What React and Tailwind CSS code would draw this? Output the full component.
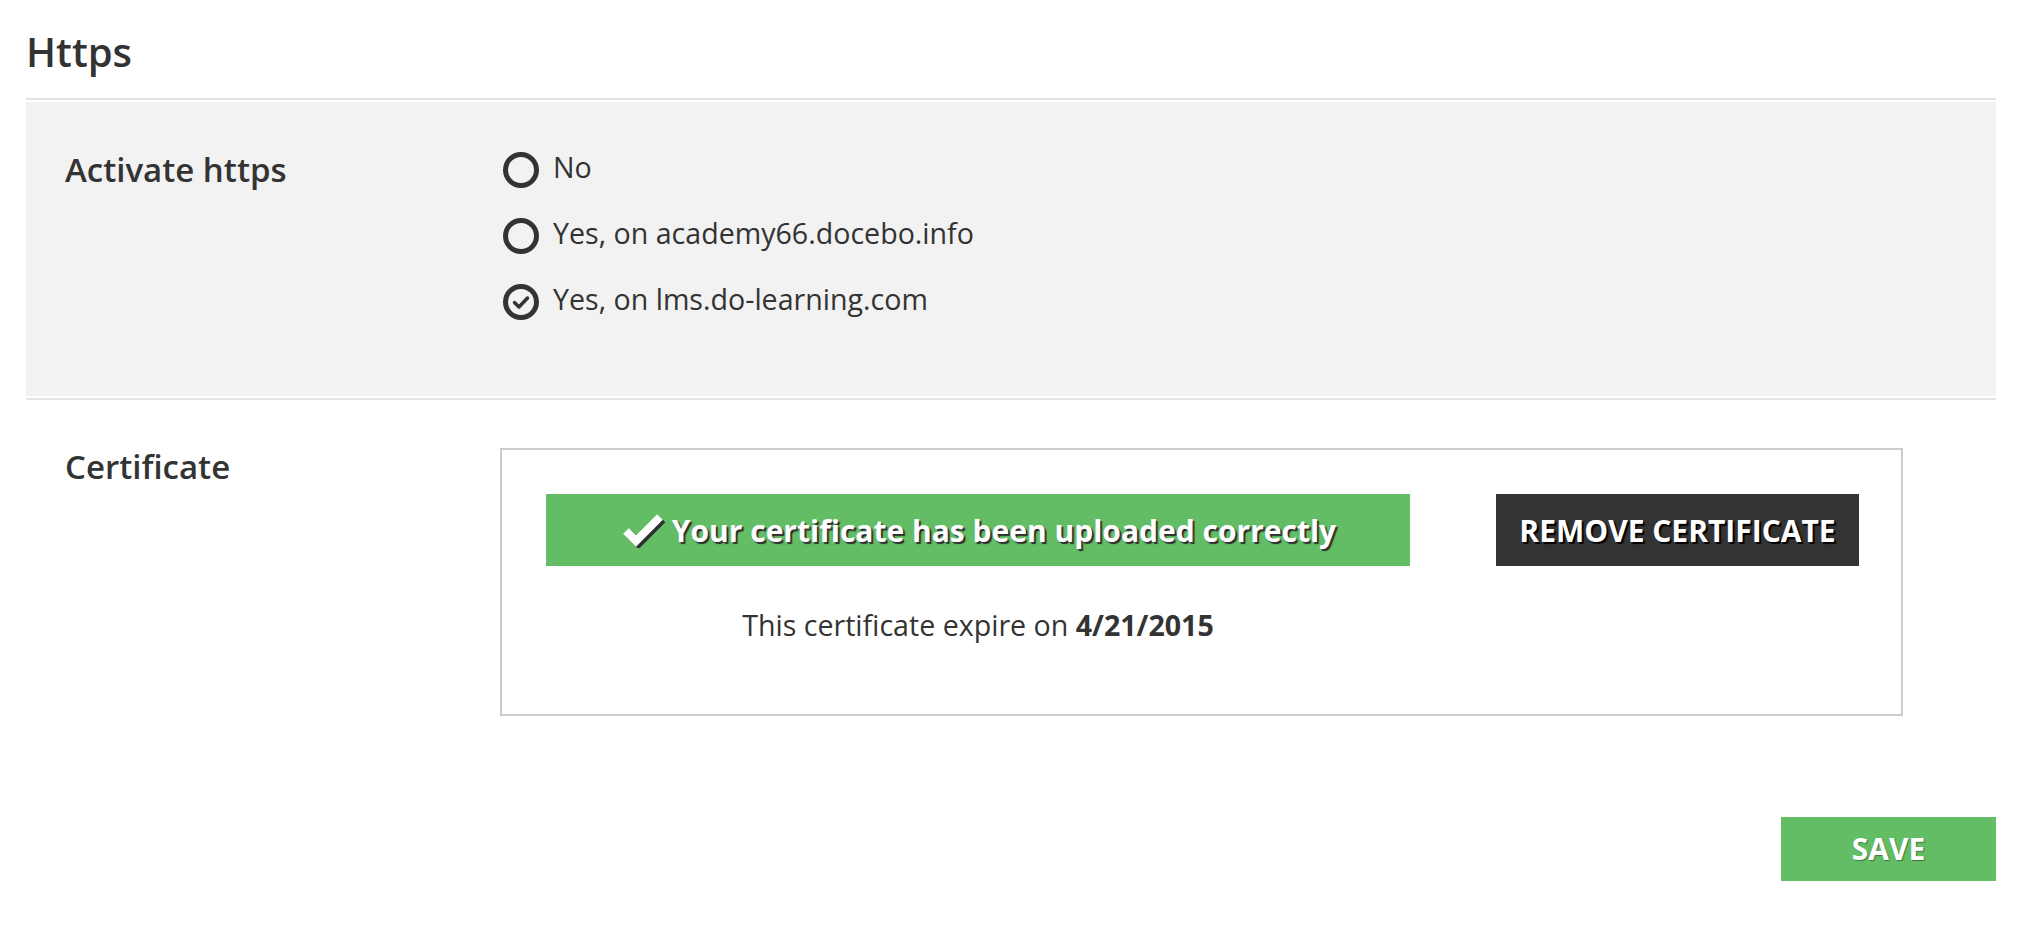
import React from "react";

function Radio({ checked }) {
  return (
    <svg width="38" height="38" viewBox="0 0 38 38" className="mt-[17px] shrink-0">
      <circle cx="19" cy="19" r="15.5" fill="none" stroke="#333333" strokeWidth="5" />
      {checked && (
        <path d="M12.5 19.5l4.5 4.5 8.5-9" fill="none" stroke="#333333" strokeWidth="3.5" strokeLinecap="round" strokeLinejoin="round" />
      )}
    </svg>
  );
}

function Check() {
  return (
    <svg width="46" height="36" viewBox="0 0 46 36" className="shrink-0">
      <path d="M6 19l10 10L40 5" fill="none" stroke="#2f2f2f" strokeWidth="8" transform="translate(2.5 2.5)" />
      <path d="M6 19l10 10L40 5" fill="none" stroke="#ffffff" strokeWidth="8" />
    </svg>
  );
}

const options = [
  { label: "No", checked: false },
  { label: "Yes, on academy66.docebo.info", checked: false },
  { label: "Yes, on lms.do-learning.com", checked: true },
];

export default function App() {
  return (
    <div className="min-h-[930px] bg-white pl-[26px] pr-[32px] font-['Open_Sans',sans-serif] text-[#333333]">
      <h1 className="pt-[32px] text-[40px] font-semibold leading-none">Https</h1>

      {/* activate https */}
      <div className="mt-[26px] border-y-2 border-[#e4e4e4] py-[2px]">
        <div className="flex bg-[#f1f2f1] pl-[39px] pt-[32px] pb-[64px]">
          <div className="w-[435px] pt-[19px] text-[33px] font-semibold leading-none">Activate https</div>
          <div className="flex flex-col">
            {options.map((opt, i) => (
              <label key={i} className="ml-[2px] flex h-[66px] items-start gap-[13px] text-[28.6px] leading-[66px]">
                <Radio checked={opt.checked} />
                <span>{opt.label}</span>
              </label>
            ))}
          </div>
        </div>
      </div>

      {/* certificate */}
      <div className="mt-[48px] flex pl-[39px]">
        <div className="w-[435px] pt-[2px] text-[33px] font-semibold leading-none">Certificate</div>
        <div className="w-[1403px] border-2 border-[#cccccc] pl-[44px] pr-[42px] pt-[44px] pb-[74px]">
          <div className="flex gap-[86px]">
            <div className="flex w-[864px] flex-col">
              <div className="flex h-[72px] items-center justify-center gap-[6px] bg-[#62bd64] text-[30px] font-bold text-white [text-shadow:2px_2px_1px_#2f2f2f]">
                <Check />
                <span>Your certificate has been uploaded correctly</span>
              </div>
              <p className="mt-[45px] text-center text-[28.6px] leading-none">
                This certificate expire on <span className="font-bold">4/21/2015</span>
              </p>
            </div>
            <button className="flex h-[72px] w-[363px] items-center justify-center bg-[#333333] text-[30px] font-bold uppercase text-white [text-shadow:2px_2px_1px_#000000]">
              Remove certificate
            </button>
          </div>
        </div>
      </div>

      <div className="mt-[101px] flex justify-end">
        <button className="h-[64px] w-[215px] bg-[#62bd64] text-[30px] font-bold text-white [text-shadow:1px_1px_1px_#3d7a3e]">
          SAVE
        </button>
      </div>
    </div>
  );
}
